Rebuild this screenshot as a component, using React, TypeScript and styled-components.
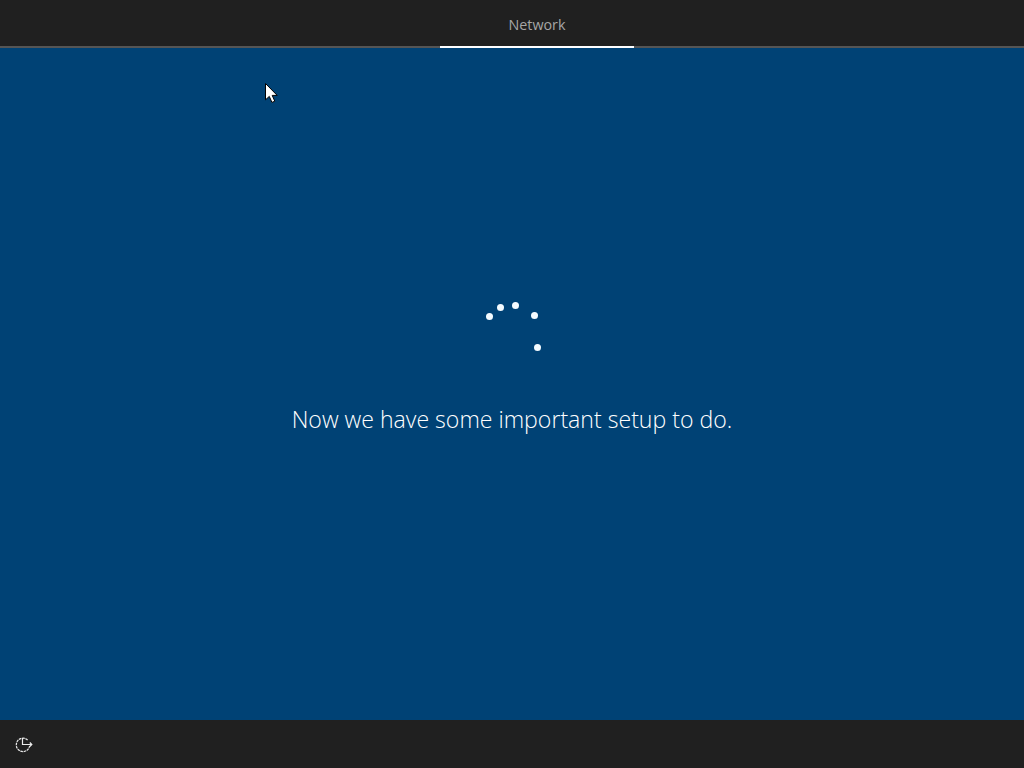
import styled, { createGlobalStyle } from "styled-components";

const GlobalStyle = createGlobalStyle`
    html, body {
        margin: 0;
        padding: 0;
        background: #004275;
    }
`;

const Screen = styled.div`
    position: relative;
    width: 1024px;
    height: 768px;
    overflow: hidden;
    display: flex;
    flex-direction: column;
    background: #004275;
    font-family: "Open Sans", "Noto Sans", "Liberation Sans", sans-serif;
`;

const TopBar = styled.header`
    box-sizing: border-box;
    height: 48px;
    padding-left: 440px;
    background: #202020;
    border-bottom: 2px solid #555555;
    display: flex;
`;

const Step = styled.div`
    box-sizing: border-box;
    width: 194px;
    height: 48px;
    padding-top: 15px;
    border-bottom: 2px solid #ffffff;
    color: #a6a6a6;
    font-size: 14.3px;
    line-height: 19px;
    text-align: center;
`;

const Main = styled.main`
    flex: 1;
    padding-top: 252px;
    display: flex;
    flex-direction: column;
    align-items: center;
`;

const Spinner = styled.svg`
    display: block;
    width: 60px;
    height: 60px;
`;

const Message = styled.h1`
    margin: 44px 0 0;
    color: #ffffff;
    font-size: 23.1px;
    font-weight: 300;
    line-height: 30px;
`;

const BottomBar = styled.footer`
    box-sizing: border-box;
    height: 48px;
    padding-left: 15px;
    background: #202020;
    display: flex;
    align-items: center;
`;

const AccessIcon = styled.svg`
    display: block;
    width: 18px;
    height: 18px;
`;

const Cursor = styled.svg`
    position: absolute;
    left: 264px;
    top: 82px;
    width: 15px;
    height: 22px;
`;

const dots = [
    [7.5, 16.5],
    [18.5, 7.5],
    [33.5, 5.5],
    [52.5, 15.5],
    [55.5, 47.5],
];

function App() {
    return (
        <Screen>
            <GlobalStyle />
            <TopBar>
                <Step>Network</Step>
            </TopBar>
            <Main>
                <Spinner viewBox="0 0 60 60">
                    {dots.map(([cx, cy]) => (
                        <circle key={cx} cx={cx} cy={cy} r="3.5" fill="#f4fbff" />
                    ))}
                </Spinner>
                <Message>Now we have some important setup to do.</Message>
            </Main>
            <BottomBar>
                <AccessIcon viewBox="0 0 18 18" fill="none" stroke="#ececec" strokeWidth="1.2">
                    <path d="M12.6 5A6.7 6.7 0 1 0 14.6 11" strokeDasharray="2.6 0.7" />
                    <path d="M7.5 3V9.5H16.8" />
                    <path d="M14.8 7.5L16.8 9.5L14.8 11.5" />
                </AccessIcon>
            </BottomBar>
            <Cursor viewBox="0 0 15 22">
                <path
                    d="M1.5 1.5V17.8L5.3 14.4L7.9 20.4L10.8 19.2L8.2 13.4H13.2Z"
                    fill="#ffffff"
                    stroke="#000000"
                    strokeWidth="1"
                />
            </Cursor>
        </Screen>
    );
}

export default App;
